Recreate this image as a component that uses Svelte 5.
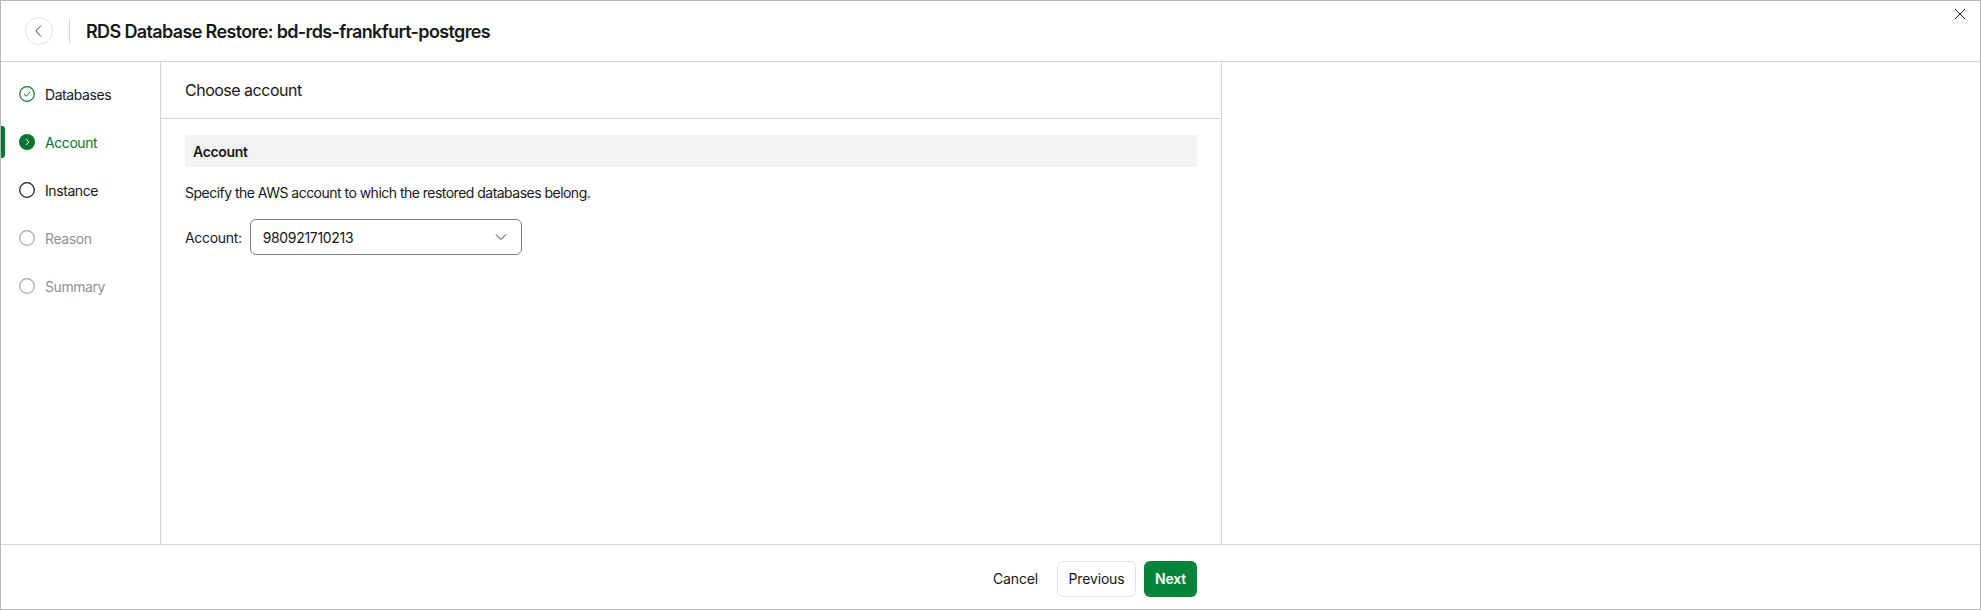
<script>
  const steps = [
    { label: 'Databases', state: 'done' },
    { label: 'Account', state: 'active' },
    { label: 'Instance', state: 'next' },
    { label: 'Reason', state: 'off' },
    { label: 'Summary', state: 'off' }
  ];
</script>

<div class="window">
  <header class="top">
    <button class="back" aria-label="Back">
      <svg width="16" height="16" viewBox="0 0 16 16"><path d="M10 2.500 4.800 8l5.200 5.500" fill="none" stroke="#3a3d3c" stroke-width="1"/></svg>
    </button>
    <span class="sep"></span>
    <h1>RDS Database Restore: bd-rds-frankfurt-postgres</h1>
    <button class="close" aria-label="Close">
      <svg width="12" height="12" viewBox="0 0 12 12"><path d="M1 1l10 10M11 1 1 11" fill="none" stroke="#1c1e1d" stroke-width="1"/></svg>
    </button>
  </header>

  <div class="body">
    <nav class="side">
      {#each steps as s}
        <div class="step {s.state}">
          <span class="dot">
            {#if s.state === 'done'}
              <svg width="16" height="16" viewBox="0 0 16 16"><circle cx="8" cy="8" r="7.300" fill="none" stroke="#05762f" stroke-width="1.200"/><path d="M5 8.200 7.200 10.300 11 6" fill="none" stroke="#05762f" stroke-width="1"/></svg>
            {:else if s.state === 'active'}
              <svg width="16" height="16" viewBox="0 0 16 16"><circle cx="8" cy="8" r="8" fill="#05762f"/><path d="M6.800 5 9.800 8l-3 3" fill="none" stroke="#fff" stroke-width="1"/></svg>
            {:else}
              <svg width="16" height="16" viewBox="0 0 16 16"><circle cx="8" cy="8" r="7.300" fill="none" stroke={s.state === 'next' ? '#161817' : '#a3a8a6'} stroke-width="1.200"/></svg>
            {/if}
          </span>
          <span>{s.label}</span>
        </div>
      {/each}
    </nav>

    <main class="main">
      <div class="title">Choose account</div>
      <div class="content">
        <div class="section">Account</div>
        <p class="desc">Specify the AWS account to which the restored databases belong.</p>
        <div class="field">
          <span>Account:</span>
          <div class="select">
            <span>980921710213</span>
            <svg width="12" height="12" viewBox="0 0 12 12"><path d="M1 3.500 6 8.500l5-5" fill="none" stroke="#2a2d2c" stroke-width="1"/></svg>
          </div>
        </div>
      </div>
    </main>

    <aside class="right"></aside>
  </div>

  <footer class="bottom">
    <button class="btn plain">Cancel</button>
    <button class="btn outline">Previous</button>
    <button class="btn primary">Next</button>
  </footer>
</div>

<style>
  :global(body) {
    margin: 0;
    background: #fff;
  }
  .window {
    box-sizing: border-box;
    width: 1981px;
    height: 610px;
    border: 1px solid #b6b8b7;
    display: flex;
    flex-direction: column;
    font-family: Inter, "Liberation Sans", sans-serif;
    font-size: 14px;
    letter-spacing: -0.32px;
    color: #161817;
    background: #fff;
  }
  button {
    font: inherit;
    letter-spacing: inherit;
    color: inherit;
    background: none;
    border: 0;
    padding: 0;
  }
  .top {
    height: 60px;
    flex: none;
    display: flex;
    align-items: center;
    padding-left: 24px;
    border-bottom: 1px solid #d2d5d4;
    position: relative;
  }
  .back {
    width: 28px;
    height: 28px;
    border-radius: 50%;
    border: 1px solid #dfe1e0;
    box-sizing: border-box;
    display: flex;
    align-items: center;
    justify-content: center;
  }
  .sep {
    width: 1px;
    height: 24px;
    background: #d2d5d4;
    margin: 0 16px;
  }
  h1 {
    margin: 0;
    font-size: 18px;
    font-weight: 600;
    letter-spacing: -0.64px;
  }
  .close {
    position: absolute;
    top: 7px;
    right: 14px;
    width: 12px;
    height: 12px;
    display: flex;
  }
  .body {
    flex: 1;
    display: flex;
    min-height: 0;
  }
  .side {
    width: 159px;
    flex: none;
    border-right: 1px solid #d2d5d4;
    padding-top: 8px;
  }
  .step {
    height: 48px;
    display: flex;
    align-items: center;
    gap: 10px;
    padding-left: 18px;
    position: relative;
    letter-spacing: -0.42px;
  }
  .dot {
    width: 16px;
    height: 16px;
    display: flex;
  }
  .step.active {
    color: #05762f;
  }
  .step.active::before {
    content: "";
    position: absolute;
    left: 0;
    top: 8px;
    width: 4px;
    height: 32px;
    background: #05762f;
    border-radius: 0 3px 3px 0;
  }
  .step.off {
    color: #8d9391;
  }
  .main {
    width: 1060px;
    flex: none;
    border-right: 1px solid #d2d5d4;
    display: flex;
    flex-direction: column;
  }
  .title {
    height: 57px;
    flex: none;
    box-sizing: border-box;
    padding: 0 24px;
    display: flex;
    align-items: center;
    font-size: 16px;
    letter-spacing: -0.5px;
    border-bottom: 1px solid #d2d5d4;
  }
  .content {
    padding: 16px 24px;
  }
  .section {
    height: 32px;
    background: #f2f4f3;
    display: flex;
    align-items: center;
    padding-left: 8px;
    font-weight: 600;
  }
  .desc {
    margin: 16px 0;
    line-height: 20px;
    letter-spacing: -0.52px;
  }
  .field {
    display: flex;
    align-items: center;
    gap: 8px;
  }
  .select {
    width: 272px;
    height: 36px;
    box-sizing: border-box;
    border: 1px solid #7b807e;
    border-radius: 6px;
    display: flex;
    align-items: center;
    justify-content: space-between;
    padding: 0 14px 0 12px;
  }
  .right {
    flex: 1;
  }
  .bottom {
    height: 65px;
    flex: none;
    box-sizing: border-box;
    border-top: 1px solid #d2d5d4;
    padding: 3px 0 0 976px;
    display: flex;
    align-items: center;
    gap: 8px;
  }
  .btn {
    height: 36px;
    border-radius: 6px;
    box-sizing: border-box;
    display: flex;
    align-items: center;
    justify-content: center;
    letter-spacing: -0.15px;
  }
  .plain {
    width: 72px;
    padding-left: 5px;
  }
  .outline {
    width: 79px;
    border: 1px solid #dfe1e0;
  }
  .primary {
    width: 53px;
    background: #05853a;
    color: #fff;
    font-weight: 600;
  }
</style>
